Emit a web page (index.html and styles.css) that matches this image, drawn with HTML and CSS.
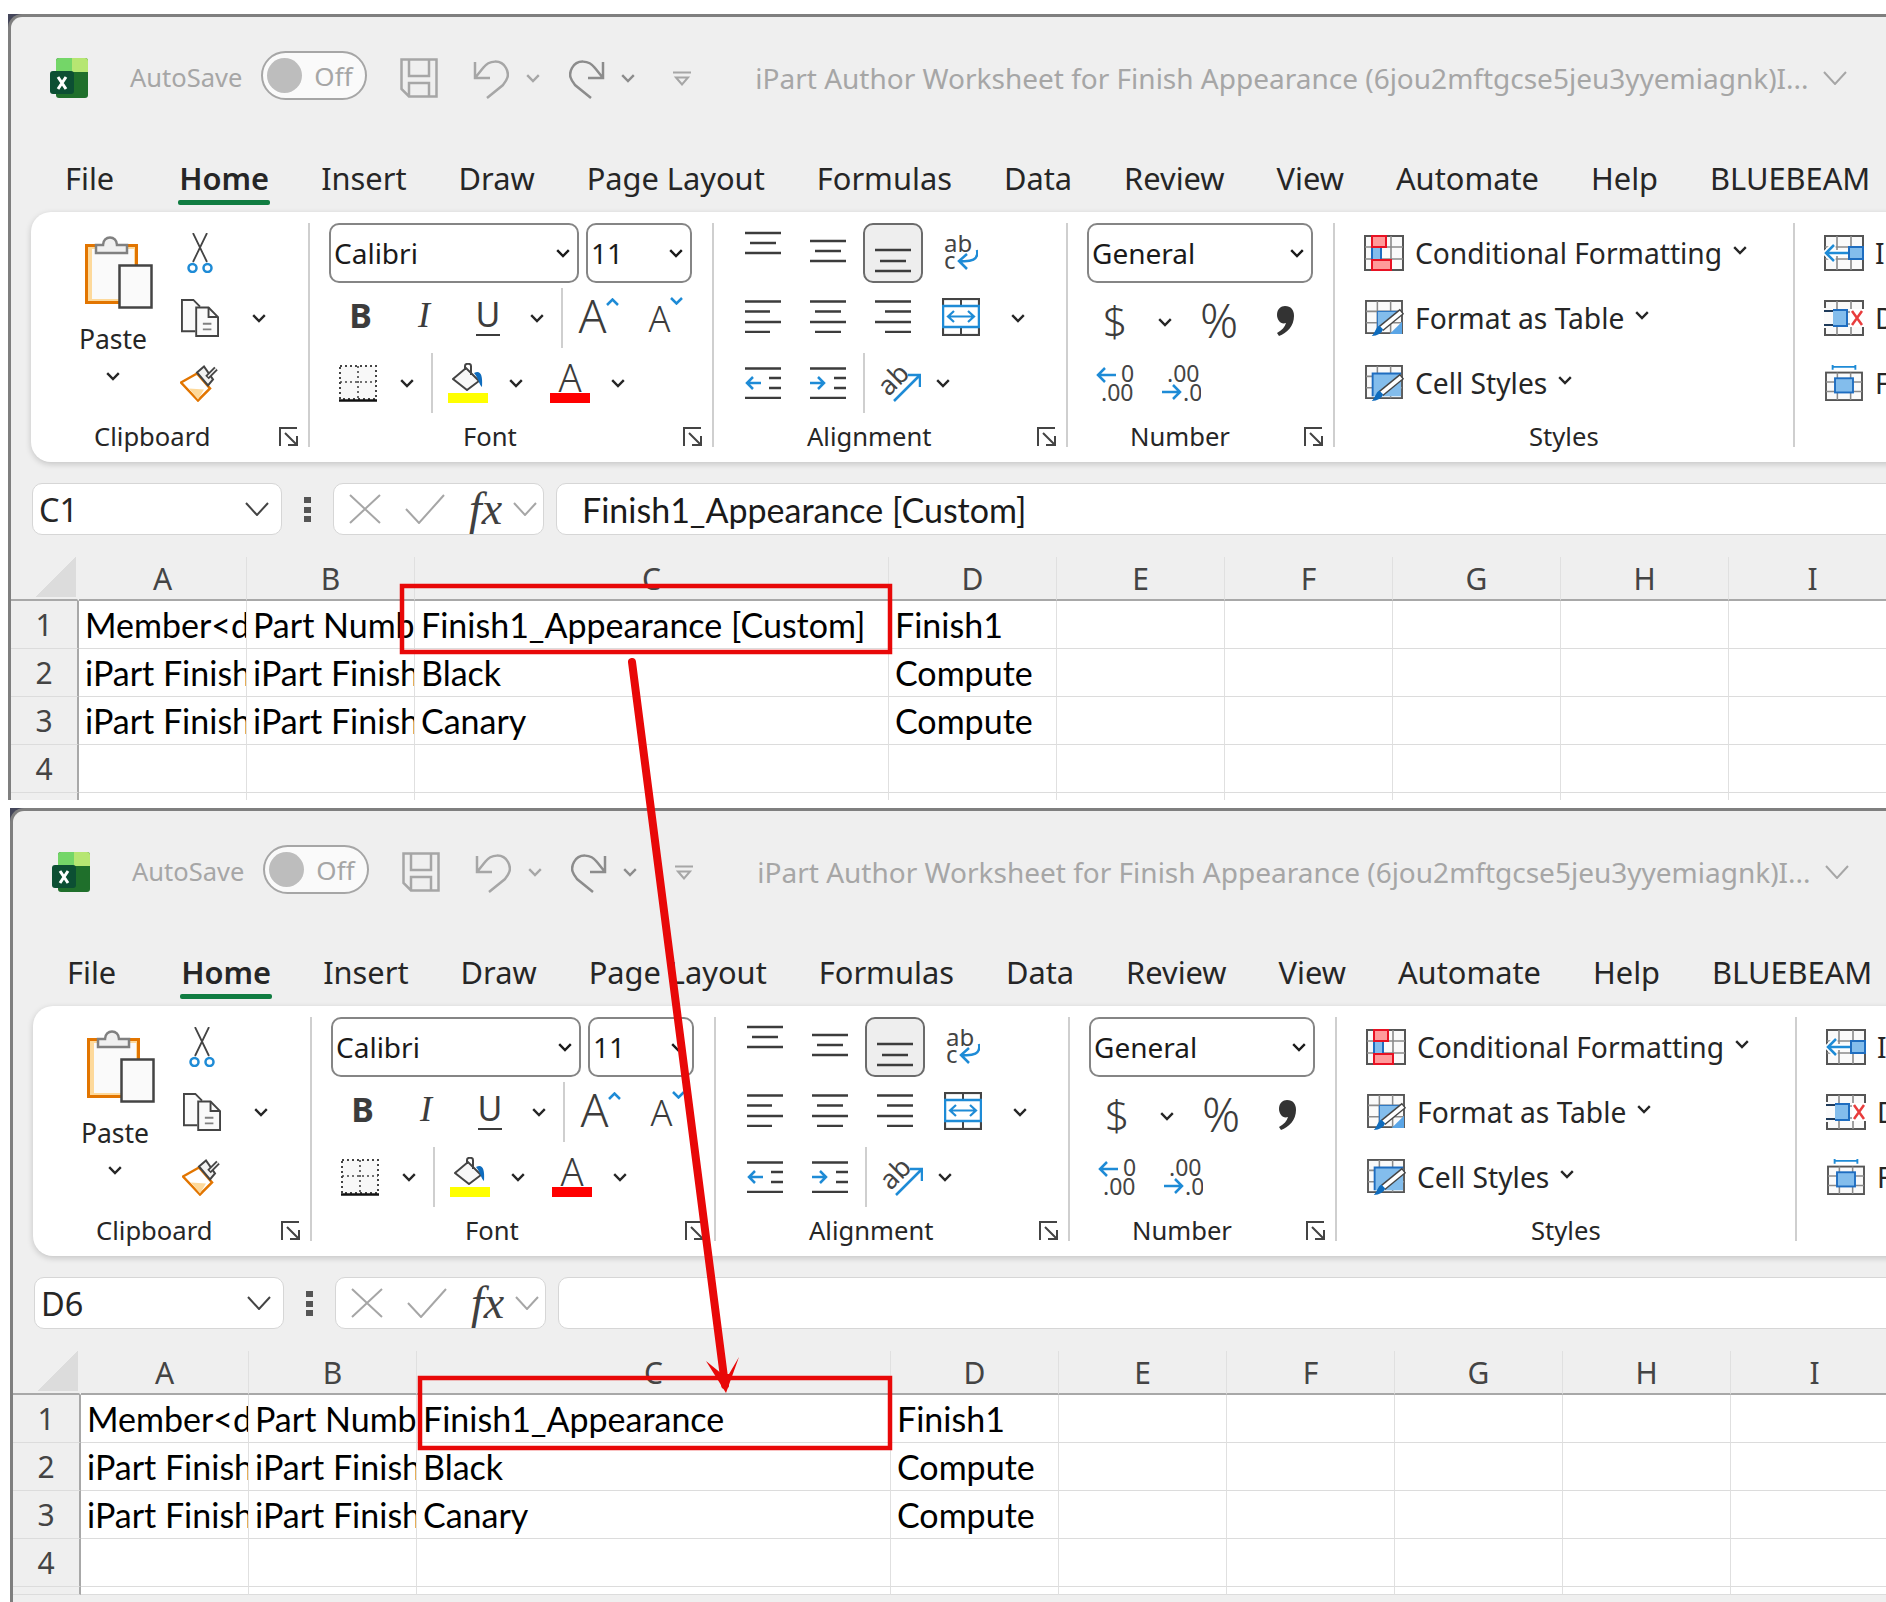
FILE: index.html
```html
<!DOCTYPE html>
<html lang="en">
<head>
    <meta charset="UTF-8">
    <title>iPart Author Worksheet</title>
    <link rel="stylesheet" href="styles.css">
</head>
<body>
<svg class="sprites" width="0" height="0">
    <defs>
        <symbol id="i-excel" viewBox="0 0 38 40">
            <rect x="6" y="0" width="32" height="40" rx="3" fill="#1f6f2b"/>
            <path d="M6 14V3a3 3 0 0 1 3-3h13v14z" fill="#74d668"/>
            <path d="M22 0h13a3 3 0 0 1 3 3v11H22z" fill="#b6e672"/>
            <rect x="0" y="13" width="24" height="23" rx="3" fill="#0c4f33"/>
            <path d="M8 19l8 12M16 19L8 31" stroke="#fff" stroke-width="3" fill="none"/>
        </symbol>
        <symbol id="i-save" viewBox="0 0 38 40">
            <path d="M1.5 1.5H36.500V38.500H9L1.500 31ZM9 1.500V18H29V1.500M9 38.500V25H29V38.500" fill="none" stroke="#a6a6a6" stroke-width="2.500"/>
        </symbol>
        <symbol id="i-undo" viewBox="0 0 36 41">
            <path d="M2 4V20H17M2 20L10 10C16 2 28 1 33 10C37 17 34 22 30 27L14 40" fill="none" stroke="#a6a6a6" stroke-width="2.500"/>
        </symbol>
        <symbol id="i-redo" viewBox="0 0 36 41">
            <path d="M34 4V20H19M34 20L26 10C20 2 8 1 3 10C-1 17 2 22 6 27L22 40" fill="none" stroke="#8c8c8c" stroke-width="2.500"/>
        </symbol>
        <symbol id="i-qat" viewBox="0 0 18 15">
            <path d="M0 1.500H18M3 6.500L9 13.500L15 6.500Z" fill="none" stroke="#a6a6a6" stroke-width="2"/>
        </symbol>
        <symbol id="i-chev" viewBox="0 0 14 9">
            <path d="M1.200 1.200L7 7L12.800 1.200" fill="none" stroke="currentColor" stroke-width="2.400"/>
        </symbol>
        <symbol id="i-chev-thin" viewBox="0 0 24 14">
            <path d="M1 1L12 13L23 1" fill="none" stroke="currentColor" stroke-width="2"/>
        </symbol>
        <symbol id="i-launcher" viewBox="0 0 20 20">
            <path d="M1 19V1H18M6 6L18 18M18 9V18H9" fill="none" stroke="#444" stroke-width="2"/>
        </symbol>
        <symbol id="i-paste" viewBox="0 0 68 75">
            <rect x="1.500" y="11.500" width="50" height="57" fill="#fdd99b" stroke="#e27500" stroke-width="3"/>
            <rect x="7" y="15" width="42" height="50" fill="#fafafa"/>
            <path d="M11 19V11H18C18 1 32 1 32 11H42V19Z" fill="#f0f0f0" stroke="#808080" stroke-width="2.500"/>
            <rect x="34.500" y="31.500" width="32" height="42" fill="#fafafa" stroke="#444" stroke-width="2.500"/>
        </symbol>
        <symbol id="i-cut" viewBox="0 0 26 40">
            <path d="M6 0L20 29M20 0L6 29" fill="none" stroke="#444" stroke-width="1.800"/>
            <circle cx="5.500" cy="35" r="4" fill="#fff" stroke="#1e8bd6" stroke-width="2.500"/>
            <circle cx="20.500" cy="35" r="4" fill="#fff" stroke="#1e8bd6" stroke-width="2.500"/>
        </symbol>
        <symbol id="i-copy" viewBox="0 0 40 40">
            <path d="M15 34H1V1H13L20 8" fill="#fafafa" stroke="#444" stroke-width="2"/>
            <path d="M16 9H29L39 19V39H16Z" fill="#fafafa" stroke="#444" stroke-width="2"/>
            <path d="M29 9V19H39" fill="none" stroke="#444" stroke-width="2"/>
            <path d="M23 26H32M23 32H32" stroke="#808080" stroke-width="2"/>
        </symbol>
        <symbol id="i-painter" viewBox="0 0 40 37">
            <path d="M1 18L17 9L30 24L18 36Z" fill="#fff" stroke="#e27500" stroke-width="2.500"/>
            <path d="M9 24L24 25L18 35Z" fill="#fdd99b"/>
            <path d="M17 8L24 2L33 15L28 21Z" fill="#f2f2f2" stroke="#444" stroke-width="2"/>
            <path d="M27 13L36 4" stroke="#444" stroke-width="5"/>
            <path d="M28 12L36 4" stroke="#f2f2f2" stroke-width="1.500"/>
        </symbol>
        <symbol id="i-borders" viewBox="0 0 38 37">
            <rect x="1" y="1" width="36" height="33" fill="#f8f8f8" stroke="#444" stroke-width="2" stroke-dasharray="2 3"/>
            <path d="M1 17H37M19 1V34" stroke="#444" stroke-width="1.600" stroke-dasharray="2 3"/>
            <path d="M0 35.500H38" stroke="#111" stroke-width="2.500"/>
        </symbol>
        <symbol id="i-fill" viewBox="0 0 32 28">
            <path d="M1 16L14 5L27 18L15 27Z" fill="#f8f8f8" stroke="#444" stroke-width="2"/>
            <path d="M13 7V3C13 0 19 0 19 3V12" fill="none" stroke="#444" stroke-width="2"/>
            <path d="M22 10C28 7 31 11 30 24C27 22 27 16 22 10Z" fill="#0f6cbd"/>
        </symbol>
        <symbol id="i-caret-up" viewBox="0 0 13 8">
            <path d="M1 7L6.500 1.500L12 7" fill="none" stroke="#1e8bd6" stroke-width="2.500"/>
        </symbol>
        <symbol id="i-caret-down" viewBox="0 0 13 8">
            <path d="M1 1L6.500 6.500L12 1" fill="none" stroke="#1e8bd6" stroke-width="2.500"/>
        </symbol>
        <symbol id="i-al-top" viewBox="0 0 36 60">
            <path d="M0 10H36M5 20H31M0 30H36" stroke="#3c3c3c" stroke-width="2.400"/>
        </symbol>
        <symbol id="i-al-mid" viewBox="0 0 36 60">
            <path d="M0 18H36M5 28H31M0 38H36" stroke="#3c3c3c" stroke-width="2.400"/>
        </symbol>
        <symbol id="i-al-bot" viewBox="0 0 36 60">
            <path d="M0 27H36M5 38H31M0 48H36" stroke="#3c3c3c" stroke-width="2.400"/>
        </symbol>
        <symbol id="i-left" viewBox="0 0 36 33">
            <path d="M0 1.500H36M0 11.500H25M0 22H36M0 32H25" stroke="#3c3c3c" stroke-width="2.400"/>
        </symbol>
        <symbol id="i-center" viewBox="0 0 36 33">
            <path d="M0 1.500H36M5 11.500H31M0 22H36M5 32H31" stroke="#3c3c3c" stroke-width="2.400"/>
        </symbol>
        <symbol id="i-right" viewBox="0 0 36 33">
            <path d="M0 1.500H36M10 11.500H36M0 22H36M10 32H36" stroke="#3c3c3c" stroke-width="2.400"/>
        </symbol>
        <symbol id="i-wrap" viewBox="0 0 34 36">
            <text x="0" y="17" class="svg-label" font-size="24">ab</text>
            <text x="0" y="34" class="svg-label" font-size="24">c</text>
            <path d="M33 15C35 25 27 27 16 26M23 19L15 26L23 34" fill="none" stroke="#1e8bd6" stroke-width="2.500"/>
        </symbol>
        <symbol id="i-merge" viewBox="0 0 38 38">
            <rect x="1" y="1" width="36" height="36" fill="#fff" stroke="#444" stroke-width="2.200"/>
            <path d="M19 1V8M19 29V37" stroke="#444" stroke-width="2"/>
            <rect x="1" y="8" width="36" height="21" fill="#fff" stroke="#1e8bd6" stroke-width="2.500"/>
            <path d="M7 18.500H31M12 13L6 18.500L12 24M26 13L32 18.500L26 24" fill="none" stroke="#1e8bd6" stroke-width="2.200"/>
        </symbol>
        <symbol id="i-outdent" viewBox="0 0 36 32">
            <path d="M0 1.500H36M0 31H36M24 11H36M24 21H36" stroke="#3c3c3c" stroke-width="2.400"/>
            <path d="M16 16H2M8 10L2 16L8 22" fill="none" stroke="#1e8bd6" stroke-width="2.500"/>
        </symbol>
        <symbol id="i-indent" viewBox="0 0 36 32">
            <path d="M0 1.500H36M0 31H36M24 11H36M24 21H36" stroke="#3c3c3c" stroke-width="2.400"/>
            <path d="M0 16H14M8 10L14 16L8 22" fill="none" stroke="#1e8bd6" stroke-width="2.500"/>
        </symbol>
        <symbol id="i-orient" viewBox="0 0 41 37">
            <text x="-2" y="25" class="svg-label" font-size="27" transform="rotate(-45 12 16)">ab</text>
            <path d="M14 36L39 11M28 10H40V22" fill="none" stroke="#1e8bd6" stroke-width="2.500"/>
        </symbol>
        <symbol id="i-comma" viewBox="0 0 19 30">
            <path d="M9 0C15 0 18 4 18 10C18 20 11 27 3 30L1 27C6 24 9 21 10 17C5 19 1 14 1 9C1 3 5 0 9 0Z" fill="#333"/>
        </symbol>
        <symbol id="i-dec-more" viewBox="0 0 39 38">
            <text x="25" y="18" class="svg-label" font-size="23">0</text>
            <text x="5" y="37" class="svg-label" font-size="23">.00</text>
            <path d="M20 11H2M9 4L2 11L9 18" fill="none" stroke="#1e8bd6" stroke-width="2.500"/>
        </symbol>
        <symbol id="i-dec-less" viewBox="0 0 39 38">
            <text x="5" y="18" class="svg-label" font-size="23">.00</text>
            <text x="21" y="37" class="svg-label" font-size="23">.0</text>
            <path d="M0 28H18M11 21L18 28L11 35" fill="none" stroke="#1e8bd6" stroke-width="2.500"/>
        </symbol>
        <symbol id="i-grid" viewBox="0 0 40 36">
            <rect x="1" y="1" width="38" height="34" fill="#fafafa" stroke="#555" stroke-width="2"/>
            <path d="M1 12H39M1 24H39M13 1V35M27 1V35" stroke="#8a8a8a" stroke-width="1.600"/>
        </symbol>
        <symbol id="i-cond" viewBox="0 0 40 36">
            <use href="#i-grid" width="40" height="36"/>
            <rect x="8" y="12" width="9" height="13" fill="#83bdec" stroke="#1e6dc0" stroke-width="2"/>
            <rect x="8" y="1" width="14" height="11" fill="#ff9a9a" stroke="#e81123" stroke-width="2"/>
            <rect x="8" y="25" width="19" height="10" fill="#ff9a9a" stroke="#e81123" stroke-width="2"/>
        </symbol>
        <symbol id="i-table" viewBox="0 0 40 38">
            <use href="#i-grid" width="40" height="36"/>
            <path d="M13 12H38L13 34Z" fill="#83bdec" stroke="#1e6dc0" stroke-width="1"/>
            <path d="M39 23V36H26Z" fill="#5aa5e6"/>
            <path d="M39 12L17 30" stroke="#444" stroke-width="7"/>
            <path d="M38 13L17 30" stroke="#fff" stroke-width="4"/>
            <path d="M7 38C13 38 18 35 19 31L15 27C11 29 11 35 7 38Z" fill="#0f6cbd"/>
        </symbol>
        <symbol id="i-cellstyle" viewBox="0 0 40 38">
            <use href="#i-grid" width="40" height="36"/>
            <rect x="8" y="9" width="30" height="24" fill="#83bdec"/>
            <path d="M8 33V9H38" fill="none" stroke="#1e6dc0" stroke-width="2"/>
            <path d="M39 12L17 30" stroke="#444" stroke-width="7"/>
            <path d="M38 13L17 30" stroke="#fff" stroke-width="4"/>
            <path d="M7 38C13 38 18 35 19 31L15 27C11 29 11 35 7 38Z" fill="#0f6cbd"/>
        </symbol>
        <symbol id="i-ins" viewBox="0 0 40 36">
            <use href="#i-grid" width="40" height="36"/>
            <rect x="25" y="12" width="14" height="12" fill="#83bdec" stroke="#1e6dc0" stroke-width="2"/>
            <path d="M24 18H3M10 10L2 18L10 26" fill="none" stroke="#fff" stroke-width="6"/>
            <path d="M24 18H3M10 10L2 18L10 26" fill="none" stroke="#1e8bd6" stroke-width="2.500"/>
        </symbol>
        <symbol id="i-del" viewBox="0 0 40 36">
            <use href="#i-grid" width="40" height="36"/>
            <rect x="26" y="9" width="14" height="18" fill="#fff"/>
            <path d="M1 10H23V26H1" fill="#83bdec" stroke="#1e6dc0" stroke-width="2"/>
            <rect x="0" y="8" width="9" height="20" fill="#fafafa"/>
            <path d="M0 11H9M0 25H9" stroke="#1e3a5a" stroke-width="2"/>
            <path d="M28 11L38 25M38 11L28 25" stroke="#e83c3c" stroke-width="2.500"/>
        </symbol>
        <symbol id="i-fmt" viewBox="0 0 40 38">
            <rect x="1" y="8" width="38" height="29" fill="#fafafa" stroke="#555" stroke-width="2"/>
            <path d="M1 18H39M1 28H39M13 8V37M27 8V37" stroke="#8a8a8a" stroke-width="1.600"/>
            <rect x="10.500" y="14" width="19" height="15" fill="#83bdec" stroke="#1e6dc0" stroke-width="2"/>
            <path d="M8 2H32M8 0V5M32 0V5" fill="none" stroke="#1e8bd6" stroke-width="2"/>
        </symbol>
        <symbol id="i-cancel" viewBox="0 0 32 30">
            <path d="M1 1L31 29M31 1L1 29" stroke="#a6a6a6" stroke-width="2"/>
        </symbol>
        <symbol id="i-enter" viewBox="0 0 40 30">
            <path d="M1 15L14 29L39 1" fill="none" stroke="#a6a6a6" stroke-width="2"/>
        </symbol>
        <symbol id="i-dots" viewBox="0 0 7 25">
            <rect x="0" y="0" width="7" height="6" fill="#555"/>
            <rect x="0" y="10" width="7" height="6" fill="#555"/>
            <rect x="0" y="19" width="7" height="6" fill="#555"/>
        </symbol>
    </defs>
</svg>

<div class="window window-top">
    <div class="frame">
        <div class="titlebar">
            <svg class="app-icon"><use href="#i-excel"/></svg>
            <span class="autosave">AutoSave</span>
            <div class="toggle"><span class="knob"></span><span>Off</span></div>
            <svg class="qat-save"><use href="#i-save"/></svg>
            <svg class="qat-undo"><use href="#i-undo"/></svg>
            <svg class="chev qat-chev-a"><use href="#i-chev"/></svg>
            <svg class="qat-redo"><use href="#i-redo"/></svg>
            <svg class="chev qat-chev-b"><use href="#i-chev"/></svg>
            <svg class="qat-more"><use href="#i-qat"/></svg>
            <span class="doc-title">iPart Author Worksheet for Finish Appearance (6jou2mftgcse5jeu3yyemiagnk)I...</span>
            <svg class="title-chev"><use href="#i-chev-thin"/></svg>
        </div>
        <div class="tabs">
            <span class="tab">File</span>
            <span class="tab tab-active">Home</span>
            <span class="tab">Insert</span>
            <span class="tab">Draw</span>
            <span class="tab">Page Layout</span>
            <span class="tab">Formulas</span>
            <span class="tab">Data</span>
            <span class="tab">Review</span>
            <span class="tab">View</span>
            <span class="tab">Automate</span>
            <span class="tab">Help</span>
            <span class="tab">BLUEBEAM</span>
        </div>
        <div class="ribbon">
            <section class="group group-clipboard">
                <div class="group-body clip-body">
                    <div class="paste">
                        <svg class="paste-icon"><use href="#i-paste"/></svg>
                        <span class="paste-label">Paste</span>
                        <svg class="chev paste-chev"><use href="#i-chev"/></svg>
                    </div>
                    <div class="row clip-row"><svg class="ic-cut"><use href="#i-cut"/></svg></div>
                    <div class="row clip-row"><svg class="ic-40"><use href="#i-copy"/></svg><svg class="chev"><use href="#i-chev"/></svg></div>
                    <div class="row clip-row"><svg class="ic-40"><use href="#i-painter"/></svg></div>
                </div>
                <div class="group-foot"><span class="group-label">Clipboard</span><svg class="launcher"><use href="#i-launcher"/></svg></div>
            </section>
            <section class="group group-font">
                <div class="group-body">
                    <div class="row combo-row">
                        <div class="combo combo-font"><span>Calibri</span><svg class="chev"><use href="#i-chev"/></svg></div>
                        <div class="combo combo-size"><span>11</span><svg class="chev"><use href="#i-chev"/></svg></div>
                    </div>
                    <div class="row font-row-b">
                        <span class="fmt-b">B</span>
                        <span class="fmt-i">I</span>
                        <span class="fmt-u">U</span>
                        <svg class="chev"><use href="#i-chev"/></svg>
                        <span class="vsep"></span>
                        <span class="grow-a">A<svg class="caret"><use href="#i-caret-up"/></svg></span>
                        <span class="shrink-a">A<svg class="caret"><use href="#i-caret-down"/></svg></span>
                    </div>
                    <div class="row font-row-c">
                        <svg class="ic-borders"><use href="#i-borders"/></svg>
                        <svg class="chev"><use href="#i-chev"/></svg>
                        <span class="vsep"></span>
                        <div class="swatch-tool"><svg class="ic-fill"><use href="#i-fill"/></svg><span class="swatch swatch-yellow"></span></div>
                        <svg class="chev"><use href="#i-chev"/></svg>
                        <div class="swatch-tool"><span class="color-a">A</span><span class="swatch swatch-red"></span></div>
                        <svg class="chev"><use href="#i-chev"/></svg>
                    </div>
                </div>
                <div class="group-foot"><span class="group-label">Font</span><svg class="launcher"><use href="#i-launcher"/></svg></div>
            </section>
            <section class="group group-align">
                <div class="group-body">
                    <div class="row align-row">
                        <svg class="ic-line"><use href="#i-al-top"/></svg>
                        <svg class="ic-line"><use href="#i-al-mid"/></svg>
                        <div class="toggled"><svg class="ic-line"><use href="#i-al-bot"/></svg></div>
                        <svg class="ic-wrap"><use href="#i-wrap"/></svg>
                    </div>
                    <div class="row align-row">
                        <svg class="ic-just"><use href="#i-left"/></svg>
                        <svg class="ic-just"><use href="#i-center"/></svg>
                        <svg class="ic-just"><use href="#i-right"/></svg>
                        <svg class="ic-merge"><use href="#i-merge"/></svg>
                        <svg class="chev"><use href="#i-chev"/></svg>
                    </div>
                    <div class="row indent-row">
                        <svg class="ic-indent"><use href="#i-outdent"/></svg>
                        <svg class="ic-indent"><use href="#i-indent"/></svg>
                        <span class="vsep"></span>
                        <svg class="ic-orient"><use href="#i-orient"/></svg>
                        <svg class="chev"><use href="#i-chev"/></svg>
                    </div>
                </div>
                <div class="group-foot"><span class="group-label">Alignment</span><svg class="launcher"><use href="#i-launcher"/></svg></div>
            </section>
            <section class="group group-number">
                <div class="group-body">
                    <div class="row combo-row">
                        <div class="combo combo-format"><span>General</span><svg class="chev"><use href="#i-chev"/></svg></div>
                    </div>
                    <div class="row number-row">
                        <span class="num-sign">$</span>
                        <svg class="chev"><use href="#i-chev"/></svg>
                        <span class="num-sign num-pct">%</span>
                        <svg class="ic-comma"><use href="#i-comma"/></svg>
                    </div>
                    <div class="row decimal-row">
                        <svg class="ic-dec"><use href="#i-dec-more"/></svg>
                        <svg class="ic-dec"><use href="#i-dec-less"/></svg>
                    </div>
                </div>
                <div class="group-foot"><span class="group-label">Number</span><svg class="launcher"><use href="#i-launcher"/></svg></div>
            </section>
            <section class="group group-styles">
                <div class="group-body">
                    <div class="row style-row"><svg class="ic-style"><use href="#i-cond"/></svg><span>Conditional Formatting</span><svg class="chev"><use href="#i-chev"/></svg></div>
                    <div class="row style-row"><svg class="ic-style"><use href="#i-table"/></svg><span>Format as Table</span><svg class="chev"><use href="#i-chev"/></svg></div>
                    <div class="row style-row"><svg class="ic-style"><use href="#i-cellstyle"/></svg><span>Cell Styles</span><svg class="chev"><use href="#i-chev"/></svg></div>
                </div>
                <div class="group-foot"><span class="group-label">Styles</span></div>
            </section>
            <section class="group group-cells">
                <div class="group-body">
                    <div class="row style-row"><svg class="ic-style"><use href="#i-ins"/></svg><span>Insert</span></div>
                    <div class="row style-row"><svg class="ic-style"><use href="#i-del"/></svg><span>Delete</span></div>
                    <div class="row style-row"><svg class="ic-style"><use href="#i-fmt"/></svg><span>Format</span></div>
                </div>
            </section>
        </div>
        <div class="formula-bar">
            <div class="name-box"><span>C1</span><svg class="thin-chev"><use href="#i-chev-thin"/></svg></div>
            <svg class="fx-dots"><use href="#i-dots"/></svg>
            <div class="fx-box">
                <svg class="fx-cancel"><use href="#i-cancel"/></svg>
                <svg class="fx-enter"><use href="#i-enter"/></svg>
                <span class="fx-label">fx</span>
                <svg class="fx-chev"><use href="#i-chev-thin"/></svg>
            </div>
            <div class="formula-input">Finish1_Appearance [Custom]</div>
        </div>
        <div class="sheet">
            <div class="corner"></div><div class="col">A</div><div class="col">B</div><div class="col">C</div><div class="col">D</div><div class="col">E</div><div class="col">F</div><div class="col">G</div><div class="col">H</div><div class="col">I</div>
            <div class="rownum">1</div><div class="cell">Member&lt;d</div><div class="cell">Part Numb</div><div class="cell">Finish1_Appearance [Custom]</div><div class="cell">Finish1</div><div class="cell"></div><div class="cell"></div><div class="cell"></div><div class="cell"></div><div class="cell"></div>
            <div class="rownum">2</div><div class="cell">iPart Finish</div><div class="cell">iPart Finish</div><div class="cell">Black</div><div class="cell">Compute</div><div class="cell"></div><div class="cell"></div><div class="cell"></div><div class="cell"></div><div class="cell"></div>
            <div class="rownum">3</div><div class="cell">iPart Finish</div><div class="cell">iPart Finish</div><div class="cell">Canary</div><div class="cell">Compute</div><div class="cell"></div><div class="cell"></div><div class="cell"></div><div class="cell"></div><div class="cell"></div>
            <div class="rownum">4</div><div class="cell"></div><div class="cell"></div><div class="cell"></div><div class="cell"></div><div class="cell"></div><div class="cell"></div><div class="cell"></div><div class="cell"></div><div class="cell"></div>
            <div class="rownum"></div><div class="cell"></div><div class="cell"></div><div class="cell"></div><div class="cell"></div><div class="cell"></div><div class="cell"></div><div class="cell"></div><div class="cell"></div><div class="cell"></div>
        </div>
    </div>
</div>

<div class="window window-bottom">
    <div class="frame">
        <div class="titlebar">
            <svg class="app-icon"><use href="#i-excel"/></svg>
            <span class="autosave">AutoSave</span>
            <div class="toggle"><span class="knob"></span><span>Off</span></div>
            <svg class="qat-save"><use href="#i-save"/></svg>
            <svg class="qat-undo"><use href="#i-undo"/></svg>
            <svg class="chev qat-chev-a"><use href="#i-chev"/></svg>
            <svg class="qat-redo"><use href="#i-redo"/></svg>
            <svg class="chev qat-chev-b"><use href="#i-chev"/></svg>
            <svg class="qat-more"><use href="#i-qat"/></svg>
            <span class="doc-title">iPart Author Worksheet for Finish Appearance (6jou2mftgcse5jeu3yyemiagnk)I...</span>
            <svg class="title-chev"><use href="#i-chev-thin"/></svg>
        </div>
        <div class="tabs">
            <span class="tab">File</span>
            <span class="tab tab-active">Home</span>
            <span class="tab">Insert</span>
            <span class="tab">Draw</span>
            <span class="tab">Page Layout</span>
            <span class="tab">Formulas</span>
            <span class="tab">Data</span>
            <span class="tab">Review</span>
            <span class="tab">View</span>
            <span class="tab">Automate</span>
            <span class="tab">Help</span>
            <span class="tab">BLUEBEAM</span>
        </div>
        <div class="ribbon">
            <section class="group group-clipboard">
                <div class="group-body clip-body">
                    <div class="paste">
                        <svg class="paste-icon"><use href="#i-paste"/></svg>
                        <span class="paste-label">Paste</span>
                        <svg class="chev paste-chev"><use href="#i-chev"/></svg>
                    </div>
                    <div class="row clip-row"><svg class="ic-cut"><use href="#i-cut"/></svg></div>
                    <div class="row clip-row"><svg class="ic-40"><use href="#i-copy"/></svg><svg class="chev"><use href="#i-chev"/></svg></div>
                    <div class="row clip-row"><svg class="ic-40"><use href="#i-painter"/></svg></div>
                </div>
                <div class="group-foot"><span class="group-label">Clipboard</span><svg class="launcher"><use href="#i-launcher"/></svg></div>
            </section>
            <section class="group group-font">
                <div class="group-body">
                    <div class="row combo-row">
                        <div class="combo combo-font"><span>Calibri</span><svg class="chev"><use href="#i-chev"/></svg></div>
                        <div class="combo combo-size"><span>11</span><svg class="chev"><use href="#i-chev"/></svg></div>
                    </div>
                    <div class="row font-row-b">
                        <span class="fmt-b">B</span>
                        <span class="fmt-i">I</span>
                        <span class="fmt-u">U</span>
                        <svg class="chev"><use href="#i-chev"/></svg>
                        <span class="vsep"></span>
                        <span class="grow-a">A<svg class="caret"><use href="#i-caret-up"/></svg></span>
                        <span class="shrink-a">A<svg class="caret"><use href="#i-caret-down"/></svg></span>
                    </div>
                    <div class="row font-row-c">
                        <svg class="ic-borders"><use href="#i-borders"/></svg>
                        <svg class="chev"><use href="#i-chev"/></svg>
                        <span class="vsep"></span>
                        <div class="swatch-tool"><svg class="ic-fill"><use href="#i-fill"/></svg><span class="swatch swatch-yellow"></span></div>
                        <svg class="chev"><use href="#i-chev"/></svg>
                        <div class="swatch-tool"><span class="color-a">A</span><span class="swatch swatch-red"></span></div>
                        <svg class="chev"><use href="#i-chev"/></svg>
                    </div>
                </div>
                <div class="group-foot"><span class="group-label">Font</span><svg class="launcher"><use href="#i-launcher"/></svg></div>
            </section>
            <section class="group group-align">
                <div class="group-body">
                    <div class="row align-row">
                        <svg class="ic-line"><use href="#i-al-top"/></svg>
                        <svg class="ic-line"><use href="#i-al-mid"/></svg>
                        <div class="toggled"><svg class="ic-line"><use href="#i-al-bot"/></svg></div>
                        <svg class="ic-wrap"><use href="#i-wrap"/></svg>
                    </div>
                    <div class="row align-row">
                        <svg class="ic-just"><use href="#i-left"/></svg>
                        <svg class="ic-just"><use href="#i-center"/></svg>
                        <svg class="ic-just"><use href="#i-right"/></svg>
                        <svg class="ic-merge"><use href="#i-merge"/></svg>
                        <svg class="chev"><use href="#i-chev"/></svg>
                    </div>
                    <div class="row indent-row">
                        <svg class="ic-indent"><use href="#i-outdent"/></svg>
                        <svg class="ic-indent"><use href="#i-indent"/></svg>
                        <span class="vsep"></span>
                        <svg class="ic-orient"><use href="#i-orient"/></svg>
                        <svg class="chev"><use href="#i-chev"/></svg>
                    </div>
                </div>
                <div class="group-foot"><span class="group-label">Alignment</span><svg class="launcher"><use href="#i-launcher"/></svg></div>
            </section>
            <section class="group group-number">
                <div class="group-body">
                    <div class="row combo-row">
                        <div class="combo combo-format"><span>General</span><svg class="chev"><use href="#i-chev"/></svg></div>
                    </div>
                    <div class="row number-row">
                        <span class="num-sign">$</span>
                        <svg class="chev"><use href="#i-chev"/></svg>
                        <span class="num-sign num-pct">%</span>
                        <svg class="ic-comma"><use href="#i-comma"/></svg>
                    </div>
                    <div class="row decimal-row">
                        <svg class="ic-dec"><use href="#i-dec-more"/></svg>
                        <svg class="ic-dec"><use href="#i-dec-less"/></svg>
                    </div>
                </div>
                <div class="group-foot"><span class="group-label">Number</span><svg class="launcher"><use href="#i-launcher"/></svg></div>
            </section>
            <section class="group group-styles">
                <div class="group-body">
                    <div class="row style-row"><svg class="ic-style"><use href="#i-cond"/></svg><span>Conditional Formatting</span><svg class="chev"><use href="#i-chev"/></svg></div>
                    <div class="row style-row"><svg class="ic-style"><use href="#i-table"/></svg><span>Format as Table</span><svg class="chev"><use href="#i-chev"/></svg></div>
                    <div class="row style-row"><svg class="ic-style"><use href="#i-cellstyle"/></svg><span>Cell Styles</span><svg class="chev"><use href="#i-chev"/></svg></div>
                </div>
                <div class="group-foot"><span class="group-label">Styles</span></div>
            </section>
            <section class="group group-cells">
                <div class="group-body">
                    <div class="row style-row"><svg class="ic-style"><use href="#i-ins"/></svg><span>Insert</span></div>
                    <div class="row style-row"><svg class="ic-style"><use href="#i-del"/></svg><span>Delete</span></div>
                    <div class="row style-row"><svg class="ic-style"><use href="#i-fmt"/></svg><span>Format</span></div>
                </div>
            </section>
        </div>
        <div class="formula-bar">
            <div class="name-box"><span>D6</span><svg class="thin-chev"><use href="#i-chev-thin"/></svg></div>
            <svg class="fx-dots"><use href="#i-dots"/></svg>
            <div class="fx-box">
                <svg class="fx-cancel"><use href="#i-cancel"/></svg>
                <svg class="fx-enter"><use href="#i-enter"/></svg>
                <span class="fx-label">fx</span>
                <svg class="fx-chev"><use href="#i-chev-thin"/></svg>
            </div>
            <div class="formula-input"></div>
        </div>
        <div class="sheet">
            <div class="corner"></div><div class="col">A</div><div class="col">B</div><div class="col">C</div><div class="col">D</div><div class="col">E</div><div class="col">F</div><div class="col">G</div><div class="col">H</div><div class="col">I</div>
            <div class="rownum">1</div><div class="cell">Member&lt;d</div><div class="cell">Part Numb</div><div class="cell">Finish1_Appearance</div><div class="cell">Finish1</div><div class="cell"></div><div class="cell"></div><div class="cell"></div><div class="cell"></div><div class="cell"></div>
            <div class="rownum">2</div><div class="cell">iPart Finish</div><div class="cell">iPart Finish</div><div class="cell">Black</div><div class="cell">Compute</div><div class="cell"></div><div class="cell"></div><div class="cell"></div><div class="cell"></div><div class="cell"></div>
            <div class="rownum">3</div><div class="cell">iPart Finish</div><div class="cell">iPart Finish</div><div class="cell">Canary</div><div class="cell">Compute</div><div class="cell"></div><div class="cell"></div><div class="cell"></div><div class="cell"></div><div class="cell"></div>
            <div class="rownum">4</div><div class="cell"></div><div class="cell"></div><div class="cell"></div><div class="cell"></div><div class="cell"></div><div class="cell"></div><div class="cell"></div><div class="cell"></div><div class="cell"></div>
            <div class="rownum"></div><div class="cell"></div><div class="cell"></div><div class="cell"></div><div class="cell"></div><div class="cell"></div><div class="cell"></div><div class="cell"></div><div class="cell"></div><div class="cell"></div>
        </div>
    </div>
</div>

<!-- red annotations drawn over both windows -->
<svg class="markup" width="1886" height="1602" viewBox="0 0 1886 1602">
    <rect x="402" y="586" width="488" height="66" fill="none" stroke="#e80808" stroke-width="4.500"/>
    <rect x="420" y="1378" width="470" height="70" fill="none" stroke="#e80808" stroke-width="4.500"/>
    <path d="M632 662L725 1385" fill="none" stroke="#e80808" stroke-width="8" stroke-linecap="round"/>
    <polygon points="706,1361 722,1374 729,1374 739,1357 726,1393" fill="#e80808"/>
</svg>
</body>
</html>
```

FILE: styles.css
```css
body {
    margin: 0;
    width: 1886px;
    height: 1602px;
    position: relative;
    overflow: hidden;
    background-color: #fff;
    font-family: "Noto Sans", sans-serif;
    color: #262626;
}

svg {
    display: block;
    flex: none;
    overflow: visible;
}

.sprites {
    position: absolute;
}

.svg-label {
    font-family: "Noto Sans", sans-serif;
    fill: #444;
}

/* windows sit on a free canvas */
.window {
    position: absolute;
    overflow: hidden;
    background-color: #44465a;
}

.window-top {
    left: 8px;
    top: 14px;
    width: 1878px;
    height: 786px;
}

.window-bottom {
    left: 10px;
    top: 808px;
    width: 1876px;
    height: 794px;
}

.frame {
    height: 100%;
    border-top: 3px solid #7f7f7f;
    border-left: 3px solid #7f7f7f;
    border-top-left-radius: 14px;
    background-color: #efefef;
    overflow: hidden;
}

/* title bar */
.titlebar {
    display: flex;
    align-items: center;
    height: 122px;
    color: #a6a6a6;
}

.app-icon {
    width: 38px;
    height: 40px;
    margin-left: 39px;
}

.autosave {
    margin-left: 42px;
    font-size: 25.5px;
    margin-bottom: 2px;
}

.toggle {
    display: flex;
    align-items: center;
    box-sizing: border-box;
    width: 106px;
    height: 49px;
    margin-left: 19px;
    margin-bottom: 5px;
    padding-left: 4px;
    border: 2.5px solid #a6a6a6;
    border-radius: 25px;
    background-color: #fafafa;
    font-size: 26px;
}

.knob {
    width: 35px;
    height: 35px;
    margin-right: 12px;
    border-radius: 50%;
    background-color: #bdbdbd;
}

.qat-save {
    width: 38px;
    height: 40px;
    margin-left: 33px;
}

.qat-undo {
    width: 36px;
    height: 41px;
    margin-left: 35px;
}

.qat-redo {
    width: 36px;
    height: 41px;
    margin-left: 29px;
}

.qat-chev-a {
    margin-left: 17px;
}

.qat-chev-b {
    margin-left: 16px;
    color: #8c8c8c;
}

.qat-more {
    width: 18px;
    height: 15px;
    margin-left: 38px;
}

.doc-title {
    flex: 0 0 1054px;
    margin-left: 64px;
    font-size: 28px;
    white-space: nowrap;
}

.title-chev {
    width: 24px;
    height: 14px;
    margin-left: 14px;
}

/* tabs */
.tabs {
    display: flex;
    gap: 52px;
    height: 73px;
    padding-left: 54px;
    box-sizing: border-box;
    padding-top: 19px;
    font-size: 30.800px;
    line-height: 40px;
    white-space: nowrap;
}

.tab-active {
    margin-left: 13px;
    font-weight: 600;
}

.tab-active::after {
    content: "";
    display: block;
    height: 5px;
    margin: 2px -1px 0;
    border-radius: 2px;
    background-color: #107c41;
}

/* ribbon */
.ribbon {
    display: flex;
    box-sizing: border-box;
    width: 1900px;
    height: 250px;
    margin-left: 20px;
    padding-top: 11px;
    border-radius: 20px 0 0 20px;
    background-color: #fff;
    box-shadow: 0 2px 6px rgba(0, 0, 0, 0.18);
}

.group {
    flex: none;
    box-sizing: border-box;
    height: 224px;
    border-right: 2px solid #cfcfcf;
}

.group-clipboard { width: 279px; }
.group-font { width: 404px; padding-left: 19px; }
.group-align { width: 354px; padding-left: 16px; }
.group-number { width: 267px; padding-left: 19px; }
.group-styles { width: 460px; padding-left: 29px; }
.group-cells { width: 200px; padding-left: 29px; border-right: none; }

.group-body {
    display: grid;
    grid-auto-rows: 60px;
    row-gap: 5px;
    height: 202px;
}

.group-foot {
    display: flex;
    align-items: center;
    height: 24px;
    font-size: 25.600px;
    white-space: nowrap;
}

.group-label {
    line-height: 24px;
}

.launcher {
    width: 20px;
    height: 20px;
    margin-left: auto;
    margin-right: 9px;
}

.group-clipboard .group-label { margin-left: 63px; }
.group-font .group-label { margin-left: 134px; }
.group-align .group-label { margin-left: 77px; }
.group-number .group-label { margin-left: 43px; }
.group-styles .group-label { margin-left: 165px; }

.row {
    display: grid;
    align-items: center;
    justify-items: center;
    height: 60px;
}

.chev {
    width: 14px;
    height: 9px;
}

.vsep {
    width: 2px;
    height: 60px;
    background-color: #cfcfcf;
}

/* clipboard */
.clip-body {
    grid-template-columns: 139px 58px;
}

.paste {
    grid-row: 1 / span 3;
    display: flex;
    flex-direction: column;
    align-items: center;
    box-sizing: border-box;
    width: 72px;
    margin-left: 46px;
    padding-top: 11px;
}

.paste-icon {
    width: 68px;
    height: 75px;
    margin-left: 12px;
}

.paste-label {
    margin-top: 10px;
    font-size: 26.500px;
    line-height: 40px;
}

.paste-chev {
    margin-top: 13px;
}

.clip-row {
    grid-column: 2;
    grid-template-columns: 60px 58px;
    width: 118px;
}

.ic-cut {
    width: 26px;
    height: 40px;
}

.ic-40 {
    width: 40px;
    height: 38px;
}

/* font group */
.combo-row {
    display: flex;
    gap: 7px;
}

.combo {
    display: flex;
    align-items: center;
    justify-content: space-between;
    box-sizing: border-box;
    height: 60px;
    padding: 0 7px 0 3px;
    border: 2px solid #858585;
    border-radius: 10px;
    font-size: 28px;
    color: #1a1a1a;
}

.combo-font { width: 250px; }
.combo-size { width: 106px; }
.combo-format { width: 226px; }

.font-row-b {
    grid-template-columns: 63px 64px 64px 33px 18px 56px 78px;
    justify-content: start;
}

.font-row-c {
    grid-template-columns: 58px 39px 12px 60px 36px 72px 24px;
    justify-content: start;
}

.fmt-b {
    margin-bottom: 6px;
    font-size: 34px;
    font-weight: 700;
    color: #3c3c3c;
}

.fmt-i {
    margin-bottom: 6px;
    font-family: "Liberation Serif", serif;
    font-size: 36px;
    font-style: italic;
    color: #3c3c3c;
}

.fmt-u {
    margin-bottom: 6px;
    font-size: 34px;
    line-height: 40px;
    border-bottom: 2px solid #3c3c3c;
    color: #3c3c3c;
}

.grow-a,
.shrink-a {
    display: flex;
    align-items: flex-start;
    margin-bottom: 6px;
    color: #3c3c3c;
    font-weight: 300;
    line-height: 1;
}

.grow-a { font-size: 46px; }
.shrink-a { font-size: 36px; margin-top: 8px; }

.caret {
    width: 13px;
    height: 8px;
    margin-top: 6px;
}

.shrink-a .caret {
    margin-top: -4px;
}

.ic-borders {
    width: 38px;
    height: 37px;
}

.swatch-tool {
    display: flex;
    flex-direction: column;
    align-items: center;
    width: 40px;
}

.ic-fill {
    width: 32px;
    height: 28px;
}

.color-a {
    height: 28px;
    font-size: 38px;
    font-weight: 300;
    line-height: 28px;
    color: #3c3c3c;
}

.swatch {
    display: block;
    width: 40px;
    height: 10px;
    margin-top: 2px;
}

.swatch-yellow { background-color: #ffff00; }
.swatch-red { background-color: #ff0000; }

/* alignment */
.align-row {
    grid-template-columns: 65px 65px 66px 70px 44px;
    justify-content: start;
}

.indent-row {
    grid-template-columns: 65px 65px 8px 64px 22px;
    justify-content: start;
}

.ic-line {
    width: 36px;
    height: 60px;
}

.ic-just {
    width: 36px;
    height: 33px;
    margin-bottom: 3px;
}

.ic-indent {
    width: 36px;
    height: 32px;
}

.toggled {
    display: flex;
    justify-content: center;
    box-sizing: border-box;
    width: 60px;
    height: 60px;
    border: 2px solid #6b6b6b;
    border-radius: 10px;
    background-color: #eeeeee;
}

.toggled .ic-line {
    margin-top: -2px;
}

.ic-wrap {
    width: 34px;
    height: 36px;
}

.ic-merge {
    width: 38px;
    height: 38px;
    margin-bottom: 3px;
}

.ic-orient {
    width: 41px;
    height: 37px;
}

/* number */
.number-row {
    grid-template-columns: 56px 44px 64px 68px;
    justify-content: start;
}

.decimal-row {
    grid-template-columns: 56px 76px;
    justify-content: start;
}

.num-sign {
    margin-bottom: 5px;
    font-size: 43px;
    font-weight: 300;
    color: #3c3c3c;
}

.num-pct {
    font-size: 47px;
}

.ic-comma {
    width: 19px;
    height: 30px;
    margin-bottom: 4px;
}

.ic-dec {
    width: 39px;
    height: 38px;
}

/* styles and cells */
.style-row {
    display: flex;
    justify-content: flex-start;
    font-size: 28.200px;
    white-space: nowrap;
}

.ic-style {
    width: 40px;
    height: 36px;
    margin-right: 11px;
}

.style-row .chev {
    margin-left: 11px;
    margin-top: -6px;
}

/* formula bar */
.formula-bar {
    display: flex;
    margin-top: 21px;
    margin-left: 21px;
    height: 52px;
}

.name-box,
.fx-box,
.formula-input {
    display: flex;
    align-items: center;
    flex: none;
    box-sizing: border-box;
    height: 52px;
    border: 1px solid #d6d6d6;
    border-radius: 10px;
    background-color: #fff;
}

.name-box {
    justify-content: space-between;
    width: 250px;
    padding: 0 12px 0 6px;
    font-size: 32.500px;
}

.thin-chev {
    width: 24px;
    height: 14px;
    color: #444;
}

.fx-dots {
    width: 7px;
    height: 25px;
    margin: 14px 22px 0 22px;
}

.fx-box {
    width: 211px;
    margin-right: 12px;
    padding-left: 15px;
}

.fx-cancel {
    width: 32px;
    height: 30px;
}

.fx-enter {
    width: 40px;
    height: 30px;
    margin-left: 24px;
}

.fx-label {
    margin-left: 24px;
    font-family: "Liberation Serif", serif;
    font-size: 46px;
    font-style: italic;
    line-height: 46px;
    color: #404040;
}

.fx-chev {
    width: 24px;
    height: 14px;
    margin-left: 11px;
    color: #a6a6a6;
}

.formula-input {
    width: 1400px;
    padding-left: 25px;
    font-family: "Lato", sans-serif;
    font-size: 34px;
    color: #1a1a1a;
    white-space: nowrap;
}

/* worksheet */
.sheet {
    display: grid;
    grid-template-columns: 68px 168px 168px 474px repeat(6, 168px);
    grid-template-rows: 44px repeat(4, 48px) 8px;
    margin-top: 22px;
}

.corner {
    box-sizing: border-box;
    border-bottom: 2px solid #a8a8a8;
    border-right: 2px solid transparent;
    background: linear-gradient(135deg, #efefef 50%, #dcdcdc 50%) no-repeat 24px 0 / 41px 40px;
}

.col {
    display: flex;
    align-items: center;
    justify-content: center;
    box-sizing: border-box;
    border-right: 1px solid #e0e0e0;
    border-bottom: 2px solid #a8a8a8;
    font-size: 30px;
    color: #444;
}

.rownum {
    display: flex;
    align-items: center;
    justify-content: center;
    box-sizing: border-box;
    border-right: 2px solid #a8a8a8;
    border-bottom: 1px solid #dcdcdc;
    font-size: 30px;
    color: #444;
}

.cell {
    box-sizing: border-box;
    overflow: hidden;
    padding-left: 6px;
    border-right: 1px solid #e0e0e0;
    border-bottom: 1px solid #dcdcdc;
    background-color: #fff;
    font-family: "Lato", sans-serif;
    font-size: 34px;
    line-height: 47px;
    color: #000;
    white-space: nowrap;
}

/* annotation overlay */
.markup {
    position: absolute;
    left: 0;
    top: 0;
    pointer-events: none;
}
```
